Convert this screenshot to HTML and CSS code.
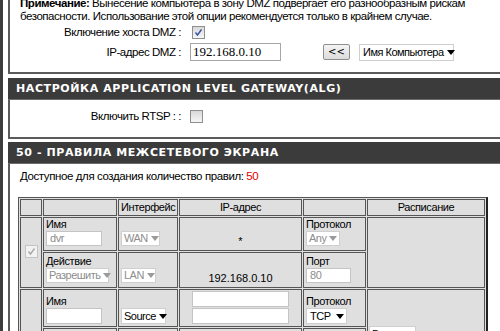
FILE: index.html
```html
<!DOCTYPE html>
<html lang="ru">
<head>
<meta charset="utf-8">
<title>Межсетевой экран</title>
<link rel="stylesheet" href="styles.css">
</head>
<body>
<div class="page">
  <section class="box box-dmz">
    <p class="note"><b>Примечание:</b> Вынесение компьютера в зону DMZ подвергает его разнообразным рискам<br>безопасности. Использование этой опции рекомендуется только в крайнем случае.</p>
    <div class="form-grid">
      <span class="lbl">Включение хоста DMZ :</span>
      <span class="ctl"><span class="chk on"><svg viewBox="0 0 11 11" width="11" height="11"><path d="M2.5 5.5 L4.5 8 L8.5 2.5" fill="none" stroke="#3553a8" stroke-width="1.4"/></svg></span></span>
      <span class="lbl">IP-адрес DMZ :</span>
      <span class="ctl ip-row"><input class="dmz-ip" type="text" value="192.168.0.10"><button class="btn" type="button">&lt;&lt;</button><span class="sel w-pc"><span>Имя Компьютера</span><i class="arr"></i></span></span>
    </div>
  </section>

  <section class="box box-alg">
    <h2 class="hdr">НАСТРОЙКА APPLICATION LEVEL GATEWAY(ALG)</h2>
    <div class="form-grid rtsp">
      <span class="lbl">Включить RTSP : :</span>
      <span class="ctl"><span class="chk"></span></span>
    </div>
  </section>

  <section class="box box-fw">
    <h2 class="hdr">50 - ПРАВИЛА МЕЖСЕТЕВОГО ЭКРАНА</h2>
    <p class="avail">Доступное для создания количество правил: <span class="red">50</span></p>
    <table class="rules">
      <colgroup><col class="c1"><col class="c2"><col class="c3"><col class="c4"><col class="c5"><col class="c6"></colgroup>
      <thead>
        <tr><th></th><th></th><th>Интерфейс</th><th>IP-адрес</th><th></th><th>Расписание</th></tr>
      </thead>
      <tbody>
        <tr class="r1">
          <td rowspan="2" class="cb"><span class="chk on dis"><svg viewBox="0 0 11 11" width="11" height="11"><path d="M2.5 5.5 L4.5 8 L8.5 2.5" fill="none" stroke="#a8a8a8" stroke-width="1.4"/></svg></span></td>
          <td><div class="fl">Имя</div><span class="txt dis w-name">dvr</span></td>
          <td><span class="sel dis w-wan"><span>WAN</span><i class="arr"></i></span></td>
          <td class="ip">*</td>
          <td><div class="fl">Протокол</div><span class="sel dis w-any"><span>Any</span><i class="arr"></i></span></td>
          <td rowspan="2"></td>
        </tr>
        <tr class="r2">
          <td><div class="fl">Действие</div><span class="sel dis w-act"><span>Разрешить</span><i class="arr"></i></span></td>
          <td><span class="sel dis w-lan"><span>LAN</span><i class="arr"></i></span></td>
          <td class="ip">192.168.0.10</td>
          <td><div class="fl">Порт</div><span class="txt dis w-port">80</span></td>
        </tr>
        <tr class="r3">
          <td rowspan="2" class="cb2"><span class="chk"></span></td>
          <td><div class="fl">Имя</div><span class="txt w-name"></span></td>
          <td><span class="sel w-src"><span>Source</span><i class="arr"></i></span></td>
          <td class="ips"><span class="txt w-ip"></span><span class="txt w-ip"></span></td>
          <td><div class="fl">Протокол</div><span class="sel w-tcp"><span>TCP</span><i class="arr"></i></span></td>
          <td rowspan="2" class="sched"><span class="sel w-all"><span>Всегда</span><i class="arr"></i></span></td>
        </tr>
        <tr class="r4">
          <td><div class="fl">Действие</div><span class="sel w-act"><span>Разрешить</span><i class="arr"></i></span></td>
          <td><span class="sel w-lan"><span>LAN</span><i class="arr"></i></span></td>
          <td class="ips"><span class="txt w-ip"></span><span class="txt w-ip"></span></td>
          <td><div class="fl">Порт</div><span class="txt w-port"></span></td>
        </tr>
      </tbody>
    </table>
  </section>
</div>
</body>
</html>
```
FILE: styles.css
```css
* { box-sizing: border-box; }
html, body { margin: 0; padding: 0; overflow: hidden; background: #fff; }
body {
  font-family: "Liberation Sans", Arial, sans-serif;
  font-size: 11px;
  letter-spacing: -0.4px;
  color: #000;
}
.page {
  width: 580px;
  min-height: 400px;
  border-left: 3px solid #3c3c3c;
  padding-left: 5px;
}
.box {
  border: 2px solid #5a5a5a;
  border-right: none;
  border-top: none;
  background: #fff;
  margin-top: 3px;
}
.box-dmz { margin-top: -3px; padding: 0 10px 11px; }
.box-alg { margin-top: 4px; }
.note { margin: 0; line-height: 13px; font-size: 11.5px; letter-spacing: -0.45px; }
.hdr {
  margin: 0;
  height: 22px;
  line-height: 22px;
  background: #3b3b3b;
  border-bottom: 1px solid #6d6d6d;
  color: #fff;
  font-family: "DejaVu Sans", sans-serif;
  font-size: 11px;
  font-weight: bold;
  letter-spacing: 0.6px;
  padding-left: 8px;
  margin-left: -2px;
}
.form-grid {
  display: grid;
  grid-template-columns: 161px auto;
  column-gap: 9px;
  row-gap: 4px;
  align-items: center;
  margin-top: 3px;
}
.lbl { text-align: right; font-size: 11.5px; line-height: 13px; white-space: nowrap; letter-spacing: -0.45px; }
.ctl { display: flex; align-items: center; }
.ctl > .chk { margin-left: 2px; }
.rtsp { margin: 10px 10px 14px; }
.rtsp .ctl > .chk { margin-left: 0; }

.chk {
  display: inline-flex;
  align-items: center;
  justify-content: center;
  width: 13px;
  height: 13px;
  border: 1px solid #8e8f8f;
  background: linear-gradient(#d8d8d8, #f6f6f6);
}
.chk.dis { border-color: #c4c4c4; background: #f2f2f2; }

.ip-row input.dmz-ip {
  width: 91px;
  height: 18px;
  border: 1px solid #a6a6a6;
  padding: 0 2px;
  font-family: "Liberation Serif", serif;
  font-size: 13px;
  letter-spacing: 0;
  color: #000;
  background: #fff;
}
.btn {
  margin-left: 42px;
  width: 27px;
  height: 16px;
  padding: 0;
  border: 1px solid #8e8e8e;
  border-radius: 2px;
  background: linear-gradient(#f4f4f4, #dcdcdc);
  font-family: "DejaVu Sans", sans-serif;
  font-size: 10px;
  line-height: 14px;
  letter-spacing: 0;
  color: #000;
}
.sel {
  display: inline-flex;
  align-items: center;
  justify-content: space-between;
  height: 15px;
  border: 1px solid #cfcfcf;
  background: #fff;
  padding: 0 2px 0 2px;
  font-size: 11px;
  line-height: 13px;
  letter-spacing: -0.5px;
  color: #000;
  white-space: nowrap;
  vertical-align: bottom;
}
.sel .arr {
  flex: none;
  margin-left: 3px;
  width: 0; height: 0;
  border-left: 4px solid transparent;
  border-right: 4px solid transparent;
  border-top: 5px solid #000;
}
.sel.dis { color: #8d8d8d; }
.sel.dis .arr { border-top-color: #9a9a9a; }
.ip-row .sel { margin-left: 9px; height: 17px; font-size: 11px; padding: 0 5px 0 3px; }
.w-pc { width: 95px; }

.box-fw { padding: 0 10px 0; }
.box-fw .hdr { margin-left: -12px; margin-right: -10px; }
.avail { margin: 6px 0 14px; font-size: 11.5px; line-height: 13px; letter-spacing: -0.4px; }
.red { color: #e00000; }

.rules {
  margin-left: -2px;
  border-collapse: separate;
  border-spacing: 1px;
  border: 1px solid #555;
  border-right: 2px solid #222;
  background: #dfdfdf;
  table-layout: fixed;
  width: 470px;
}
.c1 { width: 22px; } .c2 { width: 74px; } .c3 { width: 60px; }
.c4 { width: 123px; } .c5 { width: 63px; } .c6 { width: 118px; }
.rules th, .rules td {
  border: 1px solid #555;
  background: #dfdfdf;
  padding: 0 2px 4px;
  vertical-align: bottom;
  text-align: left;
  font-size: 11px;
  line-height: 13px;
  overflow: hidden;
}
.rules th { font-weight: normal; text-align: center; height: 17px; padding: 0 2px 1px; }
.rules th:nth-child(3) { text-align: left; padding-left: 2px; }
.r1 td { height: 34px; }
.r2 td { height: 36px; }
.r3 td { height: 38px; padding-bottom: 2px; }
.r4 td { height: 40px; }
.rules td.cb { vertical-align: middle; text-align: center; padding: 0; }
.rules td.cb2 { vertical-align: top; text-align: center; padding: 44px 0 0; }
.rules td.ip { text-align: center; padding-bottom: 2px; letter-spacing: 0; }
.rules td.ips { text-align: center; padding: 1px 0 2px; }
.rules td.sched { vertical-align: top; padding: 36px 2px 0 1px; }
.fl { line-height: 12px; margin-bottom: 1px; }
.txt {
  display: inline-block;
  height: 15px;
  border: 1px solid #c4c4c4;
  background: #fff;
  padding: 0 3px;
  font-size: 11px;
  line-height: 13px;
  vertical-align: bottom;
}
.txt.dis { color: #8d8d8d; }
.ips .txt { display: block; margin: 0 auto; height: 16px; }
.ips .txt + .txt { margin-top: 1px; }
.w-name { width: 56px; }
.w-port { width: 45px; }
.w-ip { width: 97px; }
.w-wan { width: 39px; }
.w-lan { width: 35px; }
.w-any { width: 34px; }
.w-act { width: 63px; }
.w-src { width: 45px; height: 16px; }
.w-tcp { width: 41px; height: 16px; padding-left: 3px; }
.w-all { width: 47px; height: 16px; }
.r3 .txt.w-name { height: 16px; }
```
